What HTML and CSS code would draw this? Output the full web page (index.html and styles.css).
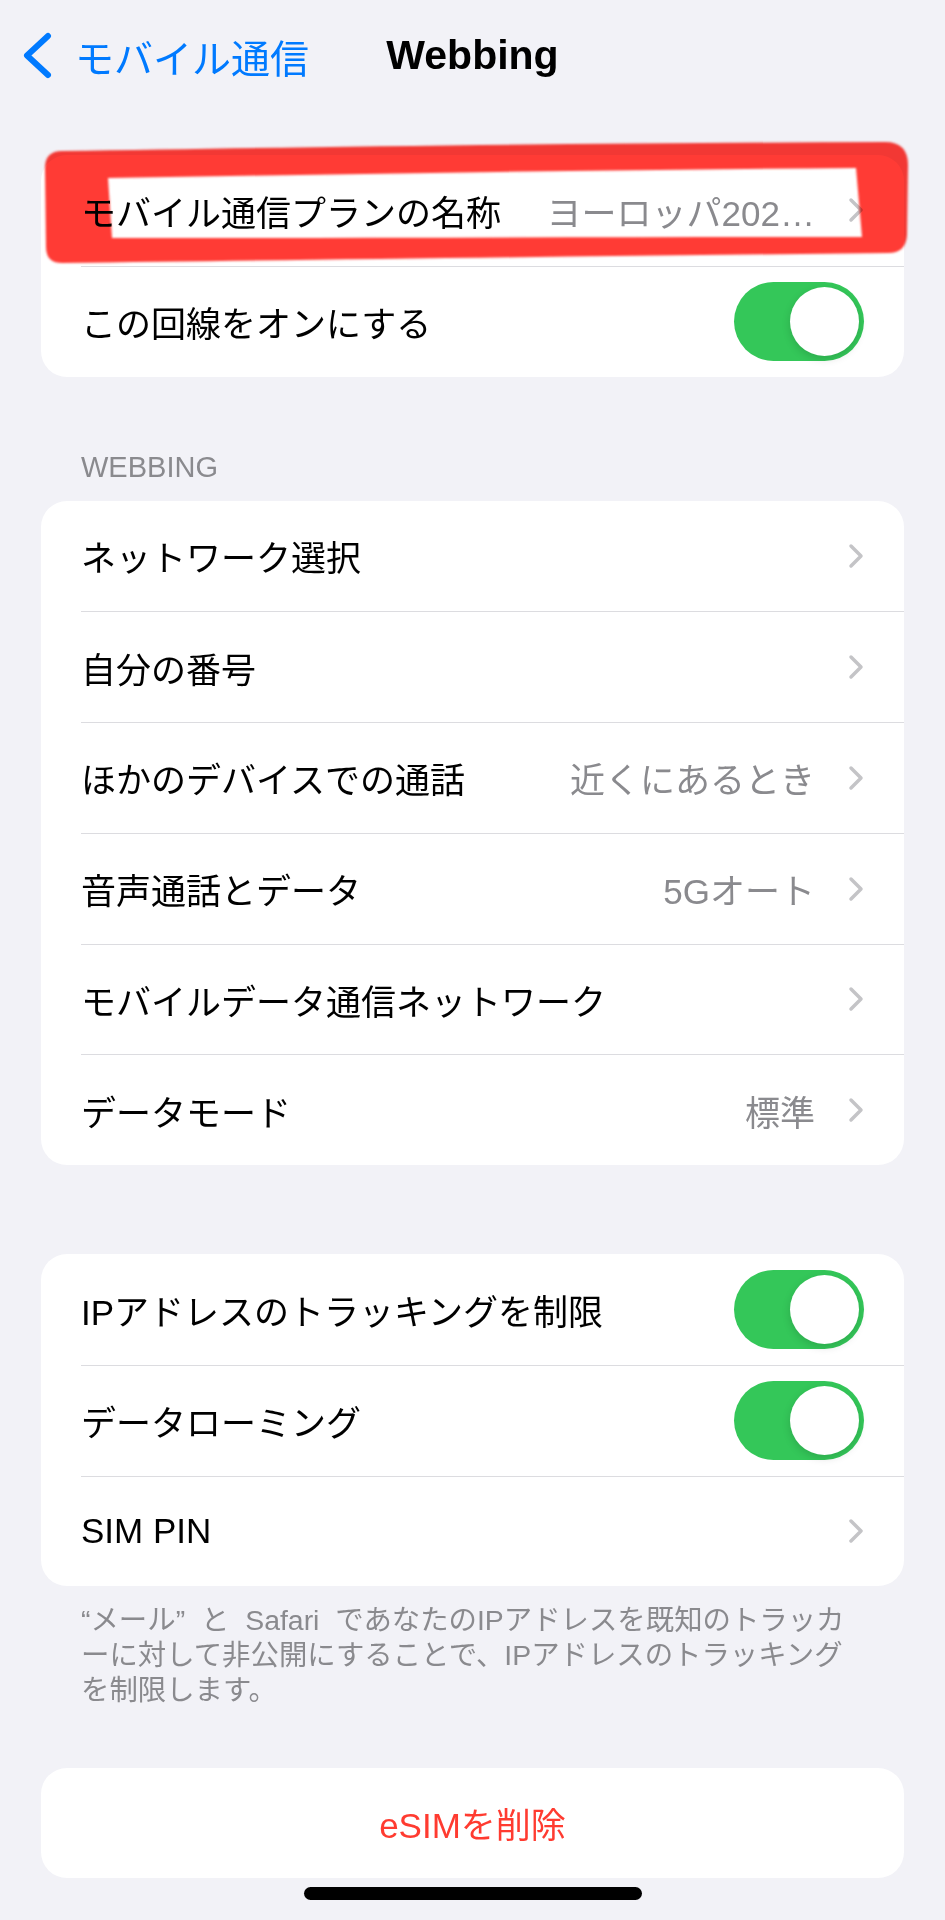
FILE: index.html
```html
<!DOCTYPE html>
<html lang="ja">
<head>
    <meta charset="UTF-8">
    <meta name="viewport" content="width=device-width, initial-scale=1.0">
    <title>Webbing</title>
    <link rel="stylesheet" href="styles.css">
</head>
<body>
<div class="screen">
    <header class="navbar">
        <a class="back" href="#">
            <svg class="back-icon" width="30" height="48" viewBox="0 0 30 48">
                <path d="M26 4 L5 23.5 L26 43" fill="none" stroke="#007aff" stroke-width="6" stroke-linecap="round" stroke-linejoin="round"/>
            </svg>
            <span>モバイル通信</span>
        </a>
        <h1 class="title">Webbing</h1>
        <span></span>
    </header>

    <!-- Линия -->
    <div class="group group-first">
        <div class="row">
            <div class="row-inner">
                <span class="label">モバイル通信プランの名称</span>
                <span class="value">ヨーロッパ202…</span>
                <svg class="chevron" width="16" height="26" viewBox="0 0 16 26"><path d="M3 3 L13 13 L3 23" /></svg>
            </div>
        </div>
        <div class="row">
            <div class="row-inner">
                <span class="label">この回線をオンにする</span>
                <span class="toggle"><span class="knob"></span></span>
            </div>
        </div>
    </div>

    <div class="group-header">WEBBING</div>
    <div class="group">
        <div class="row">
            <div class="row-inner">
                <span class="label">ネットワーク選択</span>
                <svg class="chevron" width="16" height="26" viewBox="0 0 16 26"><path d="M3 3 L13 13 L3 23" /></svg>
            </div>
        </div>
        <div class="row">
            <div class="row-inner">
                <span class="label">自分の番号</span>
                <svg class="chevron" width="16" height="26" viewBox="0 0 16 26"><path d="M3 3 L13 13 L3 23" /></svg>
            </div>
        </div>
        <div class="row">
            <div class="row-inner">
                <span class="label">ほかのデバイスでの通話</span>
                <span class="value">近くにあるとき</span>
                <svg class="chevron" width="16" height="26" viewBox="0 0 16 26"><path d="M3 3 L13 13 L3 23" /></svg>
            </div>
        </div>
        <div class="row">
            <div class="row-inner">
                <span class="label">音声通話とデータ</span>
                <span class="value">5Gオート</span>
                <svg class="chevron" width="16" height="26" viewBox="0 0 16 26"><path d="M3 3 L13 13 L3 23" /></svg>
            </div>
        </div>
        <div class="row">
            <div class="row-inner">
                <span class="label">モバイルデータ通信ネットワーク</span>
                <svg class="chevron" width="16" height="26" viewBox="0 0 16 26"><path d="M3 3 L13 13 L3 23" /></svg>
            </div>
        </div>
        <div class="row">
            <div class="row-inner">
                <span class="label">データモード</span>
                <span class="value">標準</span>
                <svg class="chevron" width="16" height="26" viewBox="0 0 16 26"><path d="M3 3 L13 13 L3 23" /></svg>
            </div>
        </div>
    </div>

    <div class="group group-third">
        <div class="row">
            <div class="row-inner">
                <span class="label">IPアドレスのトラッキングを制限</span>
                <span class="toggle"><span class="knob"></span></span>
            </div>
        </div>
        <div class="row">
            <div class="row-inner">
                <span class="label">データローミング</span>
                <span class="toggle"><span class="knob"></span></span>
            </div>
        </div>
        <div class="row">
            <div class="row-inner">
                <span class="label">SIM PIN</span>
                <svg class="chevron" width="16" height="26" viewBox="0 0 16 26"><path d="M3 3 L13 13 L3 23" /></svg>
            </div>
        </div>
    </div>
    <p class="footnote">“メール” と Safari であなたのIPアドレスを既知のトラッカ<br>ーに対して非公開にすることで、IPアドレスのトラッキング<br>を制限します。</p>

    <div class="group danger">eSIMを削除</div>

    <div class="home-indicator"></div>

    <!-- Красная пометка маркером -->
    <svg class="marker" width="945" height="300" viewBox="0 0 945 300">
        <defs>
            <filter id="soft" x="-5%" y="-20%" width="110%" height="140%">
                <feGaussianBlur stdDeviation="1.3"/>
            </filter>
        </defs>
        <path filter="url(#soft)" fill="#ff3b34" fill-rule="evenodd"
              d="M62 151 C300 147 600 143 885 142 Q908 142 908 165 L907 235 Q906 253 888 253 C600 256 300 260 62 263 Q46 263 46 247 L45 168 Q45 151 62 151 Z
                 M108 178 C350 174 600 170 856 168 L862 237 C600 237 350 238 112 238 Z"/>
    </svg>
</div>
</body>
</html>
```

FILE: styles.css
```css
body {
    margin: 0;
    background-color: #f2f2f7;
    font-family: "Liberation Sans", "Noto Sans CJK JP", sans-serif;
    color: #000;
}
.screen {
    position: relative;
    width: 945px;
    height: 1920px;
    overflow: hidden;
}
.navbar {
    display: grid;
    grid-template-columns: 1fr auto 1fr;
    align-items: center;
    height: 111px;
}
.back {
    display: flex;
    align-items: center;
    gap: 23px;
    padding-left: 22px;
    color: #007aff;
    font-size: 39px;
    text-decoration: none;
}
.title {
    margin: 0;
    font-size: 41px;
    font-weight: 700;
}
.group {
    background-color: #fff;
    border-radius: 26px;
    margin: 0 41px;
    overflow: hidden;
}
.group-first {
    margin-top: 44px;
}
.group-third {
    margin-top: 89px;
}
.row {
    display: flex;
    height: 110.75px;
    padding-left: 40px;
}
.row-inner {
    flex: 1;
    display: flex;
    align-items: center;
    padding-right: 40px;
    border-top: 1px solid #dcdce0;
    font-size: 35px;
}
.row:first-child .row-inner {
    border-top: none;
}
.label {
    flex: 1;
    white-space: nowrap;
}
.value {
    color: #8a8a8e;
    margin-right: 33px;
    white-space: nowrap;
}
.chevron {
    flex-shrink: 0;
}
.chevron path {
    fill: none;
    stroke: #c4c4c7;
    stroke-width: 3.5;
    stroke-linecap: round;
    stroke-linejoin: round;
}
.toggle {
    flex-shrink: 0;
    display: flex;
    justify-content: flex-end;
    align-items: center;
    box-sizing: border-box;
    width: 130px;
    height: 79px;
    padding: 0 5px;
    border-radius: 40px;
    background-color: #34c759;
}
.knob {
    width: 69px;
    height: 69px;
    border-radius: 50%;
    background-color: #fff;
    box-shadow: 0 3px 8px rgba(0, 0, 0, 0.15);
}
.group-header {
    margin: 73.5px 0 15.5px;
    padding-left: 81px;
    font-size: 29px;
    line-height: 35px;
    color: #8a8a8e;
}
.footnote {
    margin: 17px 0 0;
    padding-left: 81px;
    font-size: 28.4px;
    line-height: 35px;
    word-spacing: 8px;
    color: #8a8a8e;
    white-space: nowrap;
}
.danger {
    display: flex;
    align-items: center;
    justify-content: center;
    height: 110px;
    margin-top: 59.5px;
    color: #ff3b30;
    font-size: 35px;
}
.home-indicator {
    width: 338px;
    height: 13px;
    margin: 9px auto 0;
    border-radius: 7px;
    background-color: #000;
}
/* пометка поверх первой строки */
.marker {
    position: absolute;
    left: 0;
    top: 0;
    pointer-events: none;
    mix-blend-mode: multiply;
}
```
